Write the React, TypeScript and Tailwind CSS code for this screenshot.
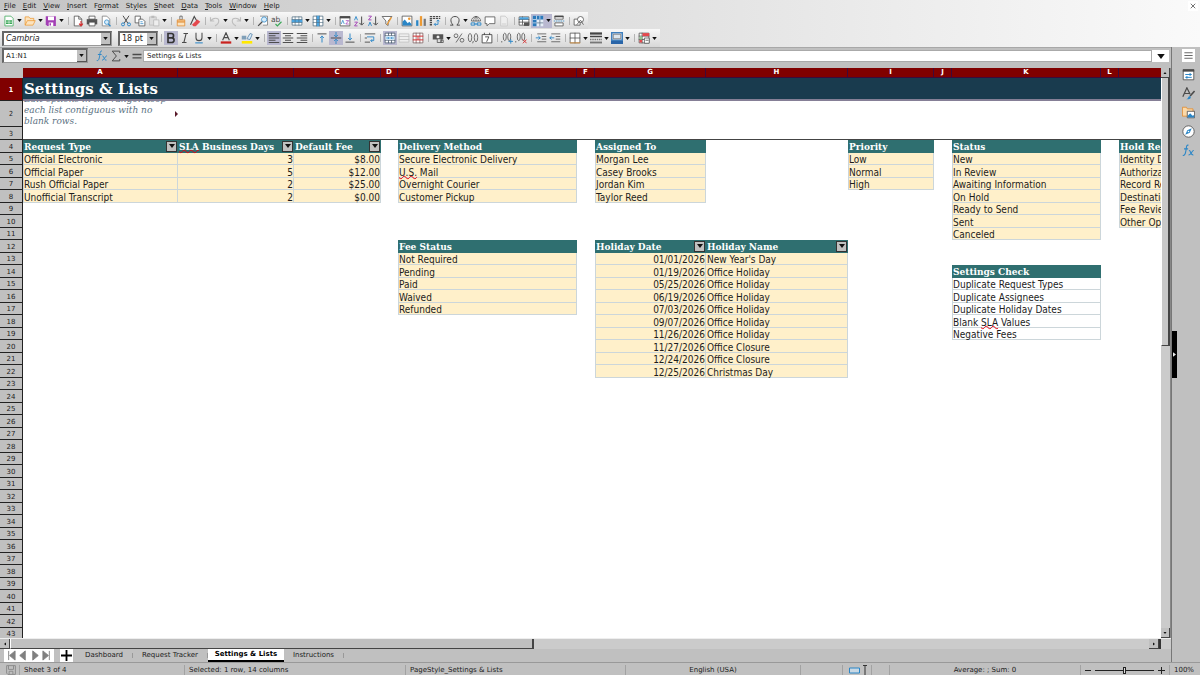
import { Fragment, type ReactNode } from "react";

const K = "#4a4a4a";
const B = "#2a86c7";

const glyphs: Record<string, ReactNode> = {
  new: (
    <>
      <path d="M2.5 1.5h8l3 3v10h-11z" fill="#fff" stroke="#3aa757" />
      <path d="M4 7h8v5H4z" fill="#3aa757" />
      <path d="M4 9.5h8M8 7v5" stroke="#fff" strokeWidth=".8" />
    </>
  ),
  open: (
    <path d="M1.5 13.5v-11h5l1.5 2h5v3h2l-3 6zM4.5 7.500h9M4.500 7.500l-3 6" fill="#fbe3bf" stroke="#ed9a33" />
  ),
  save: (
    <>
      <path d="M1 1.500h13.500v13H3L1 12.500z" fill="#a33fb5" />
      <path d="M4 2h8v5H4zM5 10h6v5H5z" fill="#fff" />
      <path d="M6 11h2v3H6z" fill="#a33fb5" />
    </>
  ),
  pdf: (
    <>
      <path d="M3 1.500h6l4 4v9H3z" fill="#fff" stroke={K} />
      <path d="M9 1.500v4h4" fill="none" stroke={K} />
      <path d="M12 8v6M9.500 11.500L12 14.500l2.500-3" fill="none" stroke="#d63031" strokeWidth="1.500" />
    </>
  ),
  print: (
    <>
      <path d="M4 1.500h8v4H4z" fill="#fff" stroke={K} />
      <path d="M1 5.500h14v7H1z" fill="#555" />
      <path d="M4 9.500h8v5H4z" fill="#fff" stroke={K} />
    </>
  ),
  preview: (
    <>
      <path d="M3 1.500h6l4 4v9H3z" fill="#fff" stroke="#777" />
      <circle cx="9" cy="9.500" r="3" fill="#d7ecfa" stroke={B} />
      <path d="M11 12l3 3" stroke={B} strokeWidth="1.500" />
    </>
  ),
  cut: (
    <>
      <path d="M4 1l6.500 10M12 1L5.500 11" stroke={K} strokeWidth="1.300" />
      <circle cx="4" cy="12.500" r="2" fill="none" stroke={B} strokeWidth="1.300" />
      <circle cx="12" cy="12.500" r="2" fill="none" stroke={B} strokeWidth="1.300" />
    </>
  ),
  copy: (
    <>
      <path d="M1.500 1.500h7v9h-7z" fill="#fff" stroke={K} />
      <path d="M6.500 5.500h5l3 3v6h-8z" fill="#fff" stroke={K} />
      <path d="M8.500 9h3M8.500 11.500h4" stroke={B} />
    </>
  ),
  paste: (
    <>
      <path d="M2 2.500h9v11H2z" fill="#ddd" stroke="#bbb" />
      <path d="M4.500 1h4v3h-4z" fill="#bbb" />
      <path d="M7.500 6.500h7v8h-7z" fill="#eee" stroke="#b5b5b5" />
    </>
  ),
  clone: (
    <>
      <path d="M6.500 1.500h3v5h-3z" fill="#fff" stroke={K} />
      <path d="M3 6.500h10v3H3z" fill="#f6c48a" stroke="#e08a2c" />
      <path d="M3 9.500h10v5H3z" fill="#fbe3bf" stroke="#e08a2c" />
    </>
  ),
  clear: (
    <>
      <path d="M2 13L7 2l4 7" fill="none" stroke={K} strokeWidth="1.500" />
      <path d="M4 13l7-7 4 3-6 6H6z" fill="#e5484d" />
    </>
  ),
  undo: <path d="M2 3v5h5M2.500 8C5 3 13 3 13 8c0 3-2 5-5 6.500" fill="none" stroke="#bdbdbd" strokeWidth="1.500" />,
  redo: <path d="M14 3v5H9M13.500 8C11 3 3 3 3 8c0 3 2 5 5 6.500" fill="none" stroke="#bdbdbd" strokeWidth="1.500" />,
  find: (
    <>
      <path d="M4 1.500h10v12H8" fill="#fff" stroke="#777" />
      <circle cx="9.500" cy="6" r="3.500" fill="#d7ecfa" stroke={B} />
      <path d="M7 9l-5.500 5.500" stroke={K} strokeWidth="1.600" />
    </>
  ),
  spell: (
    <>
      <text x="0" y="9" fontSize="10" fontFamily="DejaVu Sans" fill={K}>ab</text>
      <path d="M6 12l2.500 2.500L14 9" fill="none" stroke="#3aa757" strokeWidth="1.500" />
    </>
  ),
  row: (
    <>
      <path d="M1.500 2.500h13v11h-13z" fill="#fff" stroke="#4d6b80" />
      <path d="M1 6h14v4H1z" fill="#4ba3de" />
      <path d="M5.500 2v12M10.500 2v12M1 6h14M1 10h14" stroke="#4d6b80" strokeWidth=".8" />
    </>
  ),
  column: (
    <>
      <path d="M1.500 1.500h13v13h-13z" fill="#fff" stroke="#4d6b80" />
      <path d="M6 1h4v14H6z" fill="#4ba3de" />
      <path d="M1 6h14M1 10h14M6 1v14M10 1v14" stroke="#4d6b80" strokeWidth=".8" />
    </>
  ),
  sort: (
    <>
      <path d="M1.500 2.500h13v12h-13z" fill="#fff" stroke={K} />
      <path d="M1 1.500h14v3H1z" fill={K} />
      <path d="M3 12l2-5 2 5" fill="none" stroke={B} />
      <path d="M9 7.500h4L9 12h4" fill="none" stroke="#a33fb5" />
    </>
  ),
  sortAsc: (
    <>
      <path d="M2 7l2-5 2 5" fill="none" stroke={B} strokeWidth="1.200" />
      <path d="M2 9.500h4L2 14.500h4" fill="none" stroke="#a33fb5" strokeWidth="1.200" />
      <path d="M11.500 2v11M8.500 10.500l3 3 3-3" fill="none" stroke={K} strokeWidth="1.300" />
    </>
  ),
  sortDesc: (
    <>
      <path d="M2 1.500h4L2 6.500h4" fill="none" stroke="#a33fb5" strokeWidth="1.200" />
      <path d="M2 14.500l2-5 2 5" fill="none" stroke={B} strokeWidth="1.200" />
      <path d="M11.500 2v11M8.500 10.500l3 3 3-3" fill="none" stroke={K} strokeWidth="1.300" />
    </>
  ),
  filter: (
    <>
      <path d="M1.500 2h13L9.500 8v6l-3-2V8z" fill="#fff" stroke={K} />
      <path d="M14 3L8 13" stroke="#ed9a33" strokeWidth="1.800" />
    </>
  ),
  image: (
    <>
      <path d="M1.500 1.500h13v13h-13z" fill="#fff" stroke={K} />
      <path d="M2 14V9l3-3 4 5 2-2 3 3v2z" fill={B} />
      <circle cx="11" cy="5" r="1.700" fill="#ed9a33" />
    </>
  ),
  chart: (
    <>
      <path d="M1.500 7h3v7.500h-3z" fill={B} />
      <path d="M6.500 1.500h3v13h-3z" fill="#ed9a33" />
      <path d="M11.500 5h3v9.500h-3z" fill="#777" />
    </>
  ),
  pivot: (
    <>
      <path d="M1 2h14M1 4.500h14" stroke={K} strokeWidth="1.600" strokeDasharray="3 1" />
      <path d="M2.500 6v9" stroke={K} strokeWidth="3" strokeDasharray="2 1" />
      <path d="M7 12.500h5V7M9 10.500l-2 2 2 2M10 8.500l2-2 2 2" fill="none" stroke={B} strokeWidth="1.200" />
    </>
  ),
  omega: (
    <path d="M1.500 13.500h4C1 9 1.500 2 8 2s7 7 2.500 11.500h4" fill="none" stroke={K} strokeWidth="1.300" />
  ),
  link: (
    <>
      <path d="M2 8a6 6 0 0112 0zM8 2v6M5 8c0-3 1-5 3-6 2 1 3 3 3 6" fill="#fff" stroke={K} />
      <path d="M1.500 10.500h5v3h-5zM9.500 10.500h5v3h-5zM5 12h6" fill="none" stroke={B} strokeWidth="1.200" />
    </>
  ),
  comment: <path d="M1.500 2.500h13v9H7l-3 3v-3H1.500z" fill="#fff" stroke={K} />,
  page: (
    <>
      <path d="M3.500 1.500h6l3 3v10h-9z" fill="#eee" stroke="#c4c4c4" />
      <path d="M5 12h6" stroke="#c4c4c4" />
    </>
  ),
  define: (
    <>
      <path d="M1.500 2.500h13v11h-13zM1 6h14M1 9.500h14M6 2v11" fill="#fff" stroke={K} />
      <path d="M2 3h12v3H2z" fill="#4ba3de" />
      <path d="M8 10h7v4.500H8z" fill="#555" />
    </>
  ),
  freeze: (
    <>
      <path d="M1 1h14v14H1z" fill="#e6eef8" />
      <path d="M1 1h14v5H1zM1 1h5v14H1z" fill="#2a79ba" />
      <path d="M6 10.500h9M10.500 6v9" stroke="#5d7187" />
      <path d="M10.500 1v5M1 10.500h5M1 6h5V1" fill="none" stroke="#d9e6f2" />
    </>
  ),
  split: (
    <>
      <path d="M2.500 1.500h11v4h-11zM2.500 10.500h11v4h-11z" fill="#fff" stroke={K} />
      <path d="M2 2h12" stroke={K} strokeWidth="2" />
      <path d="M1 8h14" stroke={B} strokeDasharray="2 1" />
    </>
  ),
  shapes: (
    <>
      <path d="M1.500 5.500h8v8h-8z" fill="#fff" stroke={K} />
      <circle cx="10" cy="6" r="4" fill="#fff" stroke={K} />
      <path d="M5 13l5-6 4 6" fill="none" stroke={K} />
    </>
  ),
  bold: <path d="M4 2h4.500a2.800 2.800 0 010 5.800H4zM4 7.800h5a3.100 3.100 0 010 6.200H4z" fill="none" stroke="#333" strokeWidth="2.200" />,
  italic: <path d="M6 2h6M4 14h6M9.500 2L6.500 14" fill="none" stroke={K} strokeWidth="1.400" />,
  underline: (
    <>
      <path d="M4 1v6.500a4 4 0 008 0V1" fill="none" stroke={K} strokeWidth="1.400" />
      <path d="M3 14.500h10" stroke={B} strokeWidth="1.400" />
    </>
  ),
  fontColor: (
    <>
      <path d="M3.500 11L8 1l4.500 10M5 7.500h6" fill="none" stroke={K} strokeWidth="1.500" />
      <path d="M1 12.500h14v3H1z" fill="#c9211e" />
    </>
  ),
  highlight: (
    <>
      <path d="M8 9l4-7 3 1-3 7z" fill="#dcecf7" stroke="#4d7ea8" />
      <path d="M1 5h6v5H1z" fill="#7f9fb8" />
      <path d="M1 12h14v3.500H1z" fill="#ffe800" />
    </>
  ),
  left: <path d="M1 2h14M1 5h9M1 8h14M1 11h9M1 14h14" stroke={K} strokeWidth="1.300" />,
  center: <path d="M1 2h14M4 5h8M1 8h14M4 11h8M1 14h14" stroke={K} strokeWidth="1.300" />,
  right: <path d="M1 2h14M6 5h9M1 8h14M6 11h9M1 14h14" stroke={K} strokeWidth="1.300" />,
  top: (
    <>
      <path d="M2 2.500h12" stroke={K} strokeWidth="1.300" />
      <path d="M8 14V5M5.500 8L8 5.500 10.500 8" fill="none" stroke={B} strokeWidth="1.300" />
    </>
  ),
  middle: (
    <>
      <path d="M1 8h14" stroke={K} strokeWidth="1.300" />
      <path d="M8 0v6M5.500 4L8 6.500 10.500 4M8 16v-6M5.500 12L8 9.500l2.500 2.500" fill="none" stroke={B} strokeWidth="1.200" />
    </>
  ),
  bottom: (
    <>
      <path d="M2 13.500h12" stroke={K} strokeWidth="1.300" />
      <path d="M8 2v9M5.500 8L8 10.500 10.500 8" fill="none" stroke={B} strokeWidth="1.300" />
    </>
  ),
  wrap: (
    <>
      <path d="M1 2.500h14M1 13.500h7M1 8h3" stroke={K} strokeWidth="1.200" />
      <path d="M4 6.500h9v5H9M11 9.500l-2 2 2 2" fill="none" stroke={B} strokeWidth="1.200" />
    </>
  ),
  mergeCenter: (
    <>
      <path d="M1.500 1.500h13v13h-13zM1 5h14M1 11h14M6 1v4M10 1v4M6 11v4M10 11v4" fill="#fff" stroke="#44566b" />
      <path d="M2 5.500h12v5H2z" fill="#d7ecfa" />
      <path d="M3 8h4M13 8H9M5.500 6.500L7 8l-1.500 1.500M10.500 6.500L9 8l1.500 1.500" fill="none" stroke={B} />
    </>
  ),
  merge: <path d="M1.500 2.500h13v11h-13zM1 6h14M1 10h14" fill="#eee" stroke="#bcbcbc" />,
  unmerge: (
    <>
      <path d="M1.500 1.500h13v13h-13zM5.500 1v14M10.500 1v14" fill="#fff" stroke="#7a5a5a" />
      <path d="M1 5.500h14M1 10.500h14M8 5.500v5" stroke="#d63031" strokeWidth="1.300" />
    </>
  ),
  currency: (
    <>
      <path d="M1 3h14v7H1z" fill="#555" />
      <circle cx="8" cy="6.500" r="2" fill="#eee" />
      <path d="M7 9h5v5H7zM12 11h3v3h-3z" fill="#ddd" stroke={K} />
    </>
  ),
  percent: (
    <>
      <circle cx="4" cy="5" r="2.500" fill="none" stroke={K} />
      <circle cx="12" cy="11" r="2.500" fill="none" stroke={K} />
      <path d="M12 2L4 14" stroke={K} />
    </>
  ),
  number: (
    <>
      <ellipse cx="4" cy="7.500" rx="2.300" ry="5.500" fill="none" stroke={K} />
      <ellipse cx="12" cy="7.500" rx="2.300" ry="5.500" fill="none" stroke={K} />
      <path d="M8.500 12l-1 3" stroke={K} />
    </>
  ),
  date: (
    <>
      <path d="M1.500 3.500h13v11h-13zM4.500 1v3M11.500 1v3" fill="#fff" stroke={K} strokeWidth="1.200" />
      <path d="M5.500 6.500h5l-3 6.500" fill="none" stroke={K} strokeWidth="1.200" />
    </>
  ),
  addDecimal: (
    <>
      <ellipse cx="5" cy="6.500" rx="2" ry="5" fill="none" stroke={K} />
      <ellipse cx="11" cy="6.500" rx="2" ry="5" fill="none" stroke={K} />
      <path d="M1 12v2" stroke={K} />
      <path d="M13 9.500v6M10 12.500h6" stroke={B} strokeWidth="1.200" />
    </>
  ),
  removeDecimal: (
    <>
      <ellipse cx="5" cy="6.500" rx="2" ry="5" fill="none" stroke={K} />
      <ellipse cx="11" cy="6.500" rx="2" ry="5" fill="none" stroke={K} />
      <path d="M1 12v2" stroke={K} />
      <path d="M10.500 10l5 5M15.500 10l-5 5" stroke="#d63031" strokeWidth="1.200" />
    </>
  ),
  indent: (
    <>
      <path d="M3 2.500h12M9 6h6M9 9.500h6M3 13h12" stroke={K} />
      <path d="M1 7.800h6M4.500 5.500L7 7.800 4.500 10" fill="none" stroke={B} strokeWidth="1.200" />
    </>
  ),
  outdent: (
    <>
      <path d="M3 2.500h12M9 6h6M9 9.500h6M3 13h12" stroke={K} />
      <path d="M7 7.800H1M3.500 5.500L1 7.800 3.500 10" fill="none" stroke={B} strokeWidth="1.200" />
    </>
  ),
  borders: (
    <>
      <path d="M1.500 1.500h13v13h-13zM8 1v14M1 8h14" fill="#fff" stroke={K} />
      <path d="M1 14.500h14" stroke="#ed9a33" />
    </>
  ),
  lineStyle: (
    <>
      <path d="M0 2h16" stroke="#444" strokeWidth="3" />
      <path d="M0 6h16" stroke="#444" strokeWidth="2" />
      <path d="M0 10h16" stroke="#777" strokeWidth="2" strokeDasharray="2 1" />
      <path d="M0 14h16" stroke="#777" strokeWidth="2.500" />
    </>
  ),
  lineColor: (
    <>
      <path d="M1 1h14v10H1z" fill="#fff" stroke="#3f7fbd" strokeWidth="2" />
      <path d="M3 3h10v6H3z" fill="#dce6ee" stroke={K} strokeWidth=".8" />
      <path d="M0 12h16v4H0z" fill="#2a65a8" />
    </>
  ),
  conditional: (
    <>
      <path d="M1.500 1.500h13v13h-13zM1 5.500h14M1 10h14M5.500 1v14" fill="#fff" stroke={K} />
      <path d="M6 1.500h9v4H6z" fill="#e5484d" />
      <path d="M2 6h3.500v4H2z" fill="#8fc98f" />
      <path d="M2 10.500h3.500V14H2z" fill="#e5484d" />
      <path d="M8.500 8h6.500v7H8.500zM10 11h4" fill="#fff" stroke={K} />
    </>
  ),
  menu: <path d="M2 4h12M2 8h12M2 12h12" stroke={K} strokeWidth="1.200" />,
  properties: (
    <>
      <path d="M1.500 2.500h13v12h-13z" fill="#fff" stroke={K} />
      <path d="M1 1.500h14v3H1z" fill={K} />
      <path d="M4 8h8M4 11.500h8" stroke={B} strokeWidth="1.200" />
      <path d="M10 6.500v3M6 10v3" stroke={B} strokeWidth="1.600" />
    </>
  ),
  styles: (
    <>
      <path d="M1 12L6 1l4 8M3 8h6" fill="none" stroke={K} strokeWidth="1.500" />
      <path d="M15.500 5L10 11" stroke={K} strokeWidth="2" />
      <path d="M5 15c3 0 2-4 5-4 2 2 0 5-5 4z" fill={B} />
    </>
  ),
  gallery: (
    <>
      <path d="M.5 12.500v-11h5l1 2h7v9z" fill="#fbd9a8" stroke="#e08a2c" />
      <path d="M6.500 6.500h9v8h-9z" fill="#fff" stroke={K} />
      <path d="M7 14v-2l3-3 3 3 2-1v3z" fill={B} />
    </>
  ),
  navigator: (
    <>
      <circle cx="8" cy="8" r="7" fill="#fff" stroke={K} />
      <path d="M12 4l-2.500 5.500L4 12l2.500-5.500z" fill={B} />
      <circle cx="8" cy="8" r="1" fill="#fff" />
    </>
  ),
  fx: (
    <path
      d="M8 1.500C5.500.5 5.500 4 5 7s-1 8-4 7M2.500 6h5M8.500 8c2-1 2 6 5.500 5.500M14.500 8c-2-1-3 5.500-6.500 5.500"
      fill="none"
      stroke={B}
      strokeWidth="1.300"
    />
  ),
  sum: <path d="M13 4V1.500H3L8.500 8 3 14.500h10V12" fill="none" stroke={K} strokeWidth="1.300" />,
  equals: <path d="M2 6h12M2 10.500h12" stroke={K} strokeWidth="1.800" />,
};

const Glyph = ({ name, className = "size-3" }: { name: string; className?: string }) => (
  <svg viewBox="0 0 16 16" className={className + " shrink-0"} aria-hidden="true">
    {glyphs[name]}
  </svg>
);

const Caret = ({ className = "h-[3px] w-[5px]" }: { className?: string }) => (
  <svg viewBox="0 0 6 4" className={className + " shrink-0"} aria-hidden="true">
    <path d="M0 0h6L3 4z" fill="#111" />
  </svg>
);

// "|" is a separator, a trailing "v" a drop-down, a leading "*" a pressed tool
const standardTools =
  "new:v open:v save:v | pdf print preview | cut copy paste:v | clone clear | undo:v redo:v | find spell | row:v column:v | sort sortAsc sortDesc filter | image chart pivot | omega:v link comment page | define *freeze:v split | shapes";
const formatTools =
  "| *bold italic underline:v | fontColor:v highlight:v | *left center right | top *middle bottom | wrap | *mergeCenter merge unmerge | currency:v percent number date | addDecimal removeDecimal | indent outdent | borders:v lineStyle:v lineColor:v | conditional:v";

const Tools = ({ list }: { list: string }) => (
  <>
    {list.split(" ").map((tool, i) => {
      if (tool === "|") {
        return (
          <span key={i} className="flex w-1.5 justify-center">
            <span className="h-2 w-px bg-[#b4b4b4]" />
          </span>
        );
      }
      const [id, drop] = tool.split(":");
      const name = id.replace("*", "");
      const pressed = id.startsWith("*");
      return (
        <button
          key={i}
          aria-label={name}
          aria-pressed={pressed}
          className={
            "flex h-3.5 items-center gap-0.5 " +
            (drop ? "w-[21px] pl-px " : "w-3.5 justify-center ") +
            (pressed ? "bg-[#b9b8d0]" : "")
          }
        >
          <Glyph name={name} />
          {drop && <Caret />}
        </button>
      );
    })}
  </>
);

const menus = ["_File", "_Edit", "_View", "_Insert", "F_ormat", "St_yles", "_Sheet", "_Data", "_Tools", "_Window", "_Help"];

const Combo = ({ label, value, className }: { label: string; value: string; className: string }) => (
  <div className={"flex items-stretch border border-t-2 border-l-2 border-[#666] border-r-[#999] border-b-[#999] bg-white " + className}>
    <input
      aria-label={label}
      defaultValue={value}
      className={"w-0 min-w-0 grow px-0.5 outline-none " + (label === "Font name" ? "italic" : "")}
    />
    <button
      aria-label={label + " list"}
      className="flex w-2.5 items-center justify-center border-r border-b border-[#555] bg-[#c0c0c0]"
    >
      <Caret />
    </button>
  </div>
);

type Cell = {
  text: string;
  head?: boolean;
  plain?: boolean;
  right?: boolean;
  filter?: boolean;
  joined?: boolean;
};

const columns = [
  { id: "A", width: "w-[155px]" },
  { id: "B", width: "w-[116px]" },
  { id: "C", width: "w-[87px]" },
  { id: "D", width: "w-[17px]" },
  { id: "E", width: "w-[179px]" },
  { id: "F", width: "w-[18px]" },
  { id: "G", width: "w-[111px]" },
  { id: "H", width: "w-[142px]" },
  { id: "I", width: "w-[86px]" },
  { id: "J", width: "w-[18px]" },
  { id: "K", width: "w-[149px]" },
  { id: "L", width: "w-[18px]" },
  { id: "M", width: "w-[120px]" },
];

type List = { at: string; row: number; title: string; items: string[] } & Omit<Cell, "text">;

const lists: List[] = [
  { at: "A", row: 4, title: "Request Type", filter: true, items: ["Official Electronic", "Official Paper", "Rush Official Paper", "Unofficial Transcript"] },
  { at: "B", row: 4, title: "SLA Business Days", filter: true, right: true, joined: true, items: ["3", "5", "2", "2"] },
  { at: "C", row: 4, title: "Default Fee", filter: true, right: true, joined: true, items: ["$8.00", "$12.00", "$25.00", "$0.00"] },
  { at: "E", row: 4, title: "Delivery Method", items: ["Secure Electronic Delivery", "U.S. Mail", "Overnight Courier", "Customer Pickup"] },
  { at: "G", row: 4, title: "Assigned To", items: ["Morgan Lee", "Casey Brooks", "Jordan Kim", "Taylor Reed"] },
  { at: "I", row: 4, title: "Priority", items: ["Low", "Normal", "High"] },
  { at: "K", row: 4, title: "Status", items: ["New", "In Review", "Awaiting Information", "On Hold", "Ready to Send", "Sent", "Canceled"] },
  { at: "M", row: 4, title: "Hold Reason", items: ["Identity Details", "Authorization", "Record Review", "Destination", "Fee Review", "Other Open Item"] },
  { at: "E", row: 12, title: "Fee Status", items: ["Not Required", "Pending", "Paid", "Waived", "Refunded"] },
  {
    at: "G", row: 12, title: "Holiday Date", filter: true, right: true,
    items: ["01/01/2026", "01/19/2026", "05/25/2026", "06/19/2026", "07/03/2026", "09/07/2026", "11/26/2026", "11/27/2026", "12/24/2026", "12/25/2026"],
  },
  {
    at: "H", row: 12, title: "Holiday Name", filter: true, joined: true,
    items: ["New Year's Day", ...Array(6).fill("Office Holiday"), "Office Closure", "Office Closure", "Christmas Day"],
  },
  { at: "K", row: 14, title: "Settings Check", plain: true, items: ["Duplicate Request Types", "Duplicate Assignees", "Duplicate Holiday Dates", "Blank SLA Values", "Negative Fees"] },
];

const cells: Record<string, Cell> = {};
for (const { at, row, title, items, filter, ...rest } of lists) {
  cells[at + row] = { ...rest, text: title, head: true, filter };
  items.forEach((text, i) => {
    cells[at + (row + 1 + i)] = { ...rest, text };
  });
}

const Misspelt = ({ text }: { text: string }) => (
  <>
    {text.split(/(SLA|U\.S\.)/).map((part, i) =>
      i % 2 ? (
        <span key={i} className="underline decoration-red-600 decoration-wavy decoration-1 -underline-offset-1 [text-decoration-skip-ink:none]">
          {part}
        </span>
      ) : (
        <Fragment key={i}>{part}</Fragment>
      )
    )}
  </>
);

const DataCell = ({ cell }: { cell?: Cell }) => {
  if (!cell) return <td />;
  const { text, head, plain, right, filter, joined } = cell;
  return (
    <td
      className={
        "border-r border-b p-0 " +
        (joined ? "" : "border-l ") +
        (head
          ? "border-[#2f6f70] bg-[#2f6f70] font-[DejaVu_Serif,serif] text-[9px] font-bold text-white"
          : "border-[#ccd6da] text-[#1c1c1c] " + (plain ? "bg-white" : "bg-[#fff0ca]"))
      }
    >
      <div className={"flex h-[11px] whitespace-nowrap leading-[11px] " + (right && !head ? "justify-end" : "justify-between")}>
        <span className={"pt-px " + (joined ? "pl-px" : "")}>
          <Misspelt text={text} />
        </span>
        {filter && (
          <button
            aria-label={"Filter " + text}
            className="flex size-[11px] shrink-0 items-center justify-center border border-[#333] bg-[#c0c0c0]"
          >
            <Caret className="h-1 w-1.5" />
          </button>
        )}
      </div>
    </td>
  );
};

const rowHead = "border-r border-b border-[#222] p-0 pt-px text-center text-[7px] leading-[10px] ";

const Sheet = () => (
  <table className="w-0 table-fixed border-separate border-spacing-0 bg-white font-[DejaVu_Sans_Condensed,DejaVu_Sans,sans-serif] text-[10px]">
    <colgroup>
      <col className="w-[23px]" />
      {columns.map((c) => (
        <col key={c.id} className={c.width} />
      ))}
    </colgroup>
    <thead className="font-[DejaVu_Sans,sans-serif]">
      <tr className="h-2.5">
        <th className="bg-[#c0c0c0] p-0" />
        {columns.map((c) => (
          <th key={c.id} scope="col" className="border-r border-b border-[#3d0a3a] bg-[#800000] p-0 text-[7px] leading-[9px] font-bold text-white">
            {c.id === "M" ? "" : c.id}
          </th>
        ))}
      </tr>
    </thead>
    <tbody>
      <tr className="h-[23px]">
        <th scope="row" className={rowHead + "bg-[#800000] font-bold text-white"}>1</th>
        <td colSpan={13} className="border-b-2 border-[#857f96] bg-[#193b4e] p-0 pl-px font-[DejaVu_Serif,serif] text-[15px] leading-5 font-bold text-white">
          Settings &amp; Lists
        </td>
      </tr>
      <tr className="h-[26px]">
        <th scope="row" className={rowHead + "bg-[#c0c0c0] font-normal"}>2</th>
        <td className="p-0">
          <div className="flex h-[26px] items-end justify-between overflow-hidden pl-px font-[DejaVu_Serif,serif] text-[9px] leading-[11px] text-[#5b7282] italic">
            <p>
              Edit options in the range. Keep
              <br />
              each list contiguous with no
              <br />
              blank rows.
            </p>
            <svg viewBox="0 0 3 6" className="mb-2.5 h-1.5 w-[3px] shrink-0" aria-hidden="true">
              <path d="M0 0l3 3-3 3z" fill="#5a1a2a" />
            </svg>
          </div>
        </td>
        <td colSpan={12} />
      </tr>
      <tr className="h-[13px]">
        <th scope="row" className={rowHead + "bg-[#c0c0c0] font-normal"}>3</th>
        <td colSpan={13} className="border-b border-[#444]" />
      </tr>
      {Array.from({ length: 40 }, (_, i) => i + 4).map((row) => (
        <tr key={row} className={row % 2 ? "h-3" : "h-[13px]"}>
          <th scope="row" className={rowHead + "bg-[#c0c0c0] font-[DejaVu_Sans,sans-serif] font-normal"}>{row}</th>
          {columns.map((c) => (
            <DataCell key={c.id} cell={cells[c.id + row]} />
          ))}
        </tr>
      ))}
    </tbody>
  </table>
);

const scrollButton = "flex shrink-0 items-center justify-center border-r border-b border-[#444] bg-[#c0c0c0] ";

const VerticalScroll = () => (
  <div className="flex w-2.5 shrink-0 flex-col border-r border-[#888] bg-[#cbcbcb]">
    <button aria-label="Scroll up" className={scrollButton + "h-2.5"}>
      <Caret className="h-0.5 w-1 rotate-180" />
    </button>
    <div className="h-[268px] border-r-2 border-b border-l border-[#444] border-l-white bg-[#c8c8c8]" />
    <button aria-label="Scroll down" className={scrollButton + "mt-auto h-2.5"}>
      <Caret className="h-0.5 w-1" />
    </button>
  </div>
);

const HorizontalScroll = () => (
  <div className="flex h-[11px] border-t border-[#eee] bg-[#cbcbcb]">
    <button aria-label="Scroll left" className={scrollButton + "w-2.5"}>
      <Caret className="h-0.5 w-1 rotate-90" />
    </button>
    <div className="w-[524px] border-r-2 border-b border-l border-[#444] border-l-white bg-[#c0c0c0]" />
    <button aria-label="Scroll right" className={scrollButton + "ml-auto w-2.5"}>
      <Caret className="h-0.5 w-1 -rotate-90" />
    </button>
    <span className="mr-2.5 w-0.5 bg-[#333]" />
  </div>
);

const tabs = ["Dashboard", "Request Tracker", "Settings & Lists", "Instructions"];

const SheetTabs = () => (
  <div className="flex h-[13px] items-stretch pl-1">
    <div className="flex w-[50px] items-center justify-between bg-white px-px">
      {["M4 1v10M11 1v10L5 6z", "M9 1v10L3 6z", "M3 1v10l6-5z", "M8 1v10M1 1v10l6-5z"].map((d, i) => (
        <button key={d} aria-label={["First", "Previous", "Next", "Last"][i] + " sheet"}>
          <svg viewBox="0 0 12 12" className="size-[11px]" aria-hidden="true">
            <path d={d} fill="#808080" stroke="#808080" />
          </svg>
        </button>
      ))}
    </div>
    <button aria-label="Add sheet" className="ml-1.5 flex w-[13px] items-center justify-center bg-white">
      <svg viewBox="0 0 12 12" className="size-[11px]" aria-hidden="true">
        <path d="M6 0v12M0 6h12" stroke="#000" strokeWidth="2" />
      </svg>
    </button>
    <nav className="ml-[3px] flex items-stretch">
      {tabs.map((t) =>
        t === "Settings & Lists" ? (
          <button key={t} className="w-[76px] border-b-2 border-black bg-white font-bold text-black">
            {t}
          </button>
        ) : (
          <button key={t} className="my-1 flex items-center justify-center border-r border-[#999] px-[9px] leading-none">
            {t}
          </button>
        )
      )}
    </nav>
  </div>
);

const statusCell = "flex items-center border-l border-[#a2a2a2] ";

const StatusBar = () => (
  <footer className="flex h-[13px] items-stretch border-t border-[#999] pt-0.5">
    <div className="flex w-[19px] items-center pl-1.5">
      <svg viewBox="0 0 16 16" className="size-[10px]" aria-hidden="true">
        <path d="M1 1h14v14H3l-2-2zM4 1v6h8V1M5 15v-5h6v5" fill="none" stroke="#8a8a8a" strokeWidth="1.500" />
      </svg>
    </div>
    <span className={statusCell + "w-[165px] pl-1"}>Sheet 3 of 4</span>
    <span className={statusCell + "w-[221px] pl-1"}>Selected: 1 row, 14 columns</span>
    <span className={statusCell + "w-[220px] pl-1"}>PageStyle_Settings &amp; Lists</span>
    <span className={statusCell + "grow justify-center"}>English (USA)</span>
    <span className={statusCell + "w-[42px]"} />
    <span className={statusCell + "w-[29px] gap-1 pl-1.5"}>
      <svg viewBox="0 0 20 11" className="h-[11px] w-5" aria-hidden="true">
        <path d="M.5 3h10v5H.5z" fill="#c8d8e4" stroke={B} />
        <path d="M14 .5h4M16 .5v10M14 10.500h4" stroke="#333" />
      </svg>
    </span>
    <span className={statusCell + "w-[18px]"} />
    <span className={statusCell + "w-[191px] justify-center"}>Average: ; Sum: 0</span>
    <div className={statusCell + "w-[89px] gap-1 px-1"}>
      <button aria-label="Zoom out" className="h-px w-1.5 bg-[#222]" />
      <input
        type="range"
        aria-label="Zoom"
        defaultValue={50}
        className="h-2.5 w-0 min-w-0 grow appearance-none bg-[linear-gradient(#222,#222)] bg-[length:100%_1px] bg-center bg-no-repeat [&::-webkit-slider-thumb]:h-[7px] [&::-webkit-slider-thumb]:w-[3px] [&::-webkit-slider-thumb]:appearance-none [&::-webkit-slider-thumb]:border [&::-webkit-slider-thumb]:border-[#222] [&::-webkit-slider-thumb]:bg-[#ddd]"
      />
      <button aria-label="Zoom in">
        <svg viewBox="0 0 7 7" className="size-[7px]" aria-hidden="true">
          <path d="M3.500 0v7M0 3.500h7" stroke="#222" />
        </svg>
      </button>
    </div>
    <span className={statusCell + "w-[31px] pl-1"}>100%</span>
  </footer>
);

const Sidebar = () => (
  <aside className="flex w-[29px] shrink-0 border-l border-[#777]">
    <div className="flex w-[5px] flex-col">
      <button aria-label="Hide sidebar" className="mt-[284px] flex h-[47px] items-center justify-center bg-black">
        <Caret className="h-[3px] w-[5px] -rotate-90 invert" />
      </button>
    </div>
    <div className="flex grow flex-col items-center gap-1.5 pt-0.5">
      {["menu", "properties", "styles", "gallery", "navigator", "fx"].map((name) => (
        <button
          key={name}
          aria-label={name}
          className={"flex size-[13px] items-center justify-center " + (name === "menu" ? "bg-white" : "")}
        >
          <Glyph name={name} className={name === "menu" ? "size-[11px]" : "size-[13px]"} />
        </button>
      ))}
    </div>
  </aside>
);

const App = () => {
  return (
    <div className="flex h-screen flex-col overflow-hidden bg-[#c0c0c0] font-[DejaVu_Sans,sans-serif] text-[7px] text-[#1c1c1c]">
      <header className="bg-linear-to-r from-[#c4c4c4] to-[#fafafa]">
        <div className="flex h-3 items-center justify-between pr-0.5 pl-1">
          <nav className="flex gap-[7px]">
            {menus.map((m) => {
              const [before, after] = m.split("_");
              return (
                <button key={m}>
                  {before}
                  <u>{after[0]}</u>
                  {after.slice(1)}
                </button>
              );
            })}
          </nav>
          <button aria-label="Close document" className="flex size-2.5 items-center justify-center bg-white">
            <svg viewBox="0 0 8 8" className="size-1.5" aria-hidden="true">
              <path d="M1 1l6 6M7 1L1 7" stroke="#444" />
            </svg>
          </button>
        </div>
        <div className="flex h-[17px] w-fit items-center bg-linear-to-b from-[#f8f8f8] to-[#d8d8d8] px-0.5">
          <Tools list={standardTools} />
        </div>
        <div className="flex h-[18px] w-fit items-center bg-linear-to-b from-[#f8f8f8] to-[#d8d8d8] px-0.5 text-[8px]">
          <Combo label="Font name" value="Cambria" className="mr-1.5 h-[15px] w-[110px]" />
          <Combo label="Font size" value="18 pt" className="h-[15px] w-10" />
          <Tools list={formatTools} />
        </div>
      </header>

      <div className="flex min-h-0 grow">
        <div className="flex min-w-0 grow flex-col">
          <div className="flex h-[21px] shrink-0 items-start border-t border-[#a8a8a8] px-0.5">
            <Combo label="Name box" value="A1:N1" className="h-[15px] w-[86px]" />
            <div className="mt-0.5 flex h-3 items-center gap-0.5 pl-2">
              <button aria-label="Function wizard"><Glyph name="fx" /></button>
              <button aria-label="Sum" className="flex items-center gap-0.5">
                <Glyph name="sum" />
                <Caret />
              </button>
              <button aria-label="Formula"><Glyph name="equals" /></button>
            </div>
            <input
              aria-label="Input line"
              defaultValue="Settings & Lists"
              className="mt-0.5 h-3 w-0 min-w-0 grow border border-[#aaa] bg-white px-[3px] outline-none"
            />
            <button aria-label="Expand formula bar" className="mt-0.5 flex h-3 w-[17px] items-center justify-center bg-white">
              <Caret className="h-[5px] w-2" />
            </button>
          </div>
          <div className="flex min-h-0 grow">
            <div className="min-w-0 grow overflow-hidden bg-white">
              <Sheet />
            </div>
            <VerticalScroll />
          </div>
          <HorizontalScroll />
          <SheetTabs />
        </div>
        <Sidebar />
      </div>
      <StatusBar />
    </div>
  );
};

export default App;
